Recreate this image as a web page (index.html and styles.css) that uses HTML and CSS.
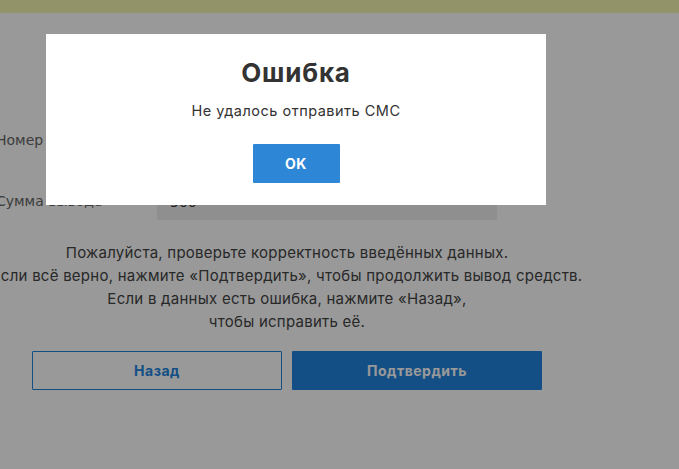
FILE: index.html
```html
<!DOCTYPE html>
<html lang="ru">
<head>
    <meta charset="UTF-8">
    <meta name="viewport" content="width=device-width, initial-scale=1.0">
    <title>Вывод средств</title>
    <link rel="stylesheet" href="styles.css">
</head>
<body>
    <div class="topbar"></div>

    <div class="page">
        <form class="withdraw-form">
            <div class="form-row">
                <label class="form-label">Номер телефона</label>
                <input class="form-input" type="text" value="+7 900 000-00-00" readonly>
            </div>
            <div class="form-row">
                <label class="form-label">Сумма вывода</label>
                <input class="form-input" type="text" value="500" readonly>
            </div>
        </form>

        <p class="notice">
            Пожалуйста, проверьте корректность введённых данных.<br>
            Если всё верно, нажмите «Подтвердить», чтобы продолжить вывод средств.<br>
            Если в данных есть ошибка, нажмите «Назад»,<br>
            чтобы исправить её.
        </p>

        <div class="actions">
            <button class="btn btn-outline" type="button">Назад</button>
            <button class="btn btn-primary" type="button">Подтвердить</button>
        </div>
    </div>

    <!-- error popup -->
    <div class="overlay">
        <div class="modal">
            <h2 class="modal-title">Ошибка</h2>
            <p class="modal-text">Не удалось отправить СМС</p>
            <button class="btn modal-ok" type="button" onclick="closeModal()">OK</button>
        </div>
    </div>

    <script>
        function closeModal() {
            document.querySelector('.overlay').style.display = 'none';
        }
    </script>
</body>
</html>
```

FILE: styles.css
```css
body {
    margin: 0;
    background: #fff;
    font-family: Inter, "Noto Sans", sans-serif;
    color: #333;
    overflow: hidden;
}
.topbar {
    height: 13px;
    background: #f5f5af;
}
.page {
    width: 590px;
    margin-left: -8px;
    padding-top: 110px;
}
.form-row {
    display: flex;
    align-items: center;
    margin-bottom: 25px;
}
.form-label {
    width: 165px;
    padding-left: 4px;
    padding-bottom: 3px;
    box-sizing: border-box;
    font-family: "DejaVu Sans", sans-serif;
    font-size: 14px;
    color: #666;
}
.form-input {
    width: 340px;
    height: 36px;
    box-sizing: border-box;
    border: none;
    background: #eee;
    padding: 0 13px;
    font-family: "DejaVu Sans", sans-serif;
    font-size: 14px;
    color: #333;
}
.notice {
    margin: -4px -30px 18px;
    text-align: center;
    font-size: 15px;
    letter-spacing: 0.25px;
    line-height: 23px;
    color: #444;
}
.actions {
    display: flex;
    justify-content: center;
    gap: 10px;
}
.btn {
    height: 39px;
    border-radius: 1px;
    font-family: inherit;
    font-weight: bold;
    font-size: 14px;
    letter-spacing: 0.5px;
    cursor: pointer;
}
.actions .btn {
    width: 250px;
}
.btn-outline {
    background: #fff;
    border: 1px solid #2184de;
    color: #2184de;
}
.btn-primary {
    background: #2184de;
    border: none;
    color: #fff;
}
.overlay {
    position: fixed;
    inset: 0;
    background: rgba(0, 0, 0, 0.4);
}
.modal {
    position: absolute;
    left: 46px;
    top: 34px;
    width: 500px;
    height: 171px;
    background: #fff;
    text-align: center;
    padding-top: 24px;
    box-sizing: border-box;
}
.modal-title {
    margin: 0;
    font-size: 26px;
    letter-spacing: 0.8px;
    line-height: 30px;
    font-weight: bold;
    color: #333;
}
.modal-text {
    margin: 13px 0 23px;
    font-size: 14.5px;
    letter-spacing: 0.5px;
    line-height: 20px;
    color: #333;
}
.modal-ok {
    width: 87px;
    background: #2e86d6;
    border: none;
    color: #fff;
}
```
